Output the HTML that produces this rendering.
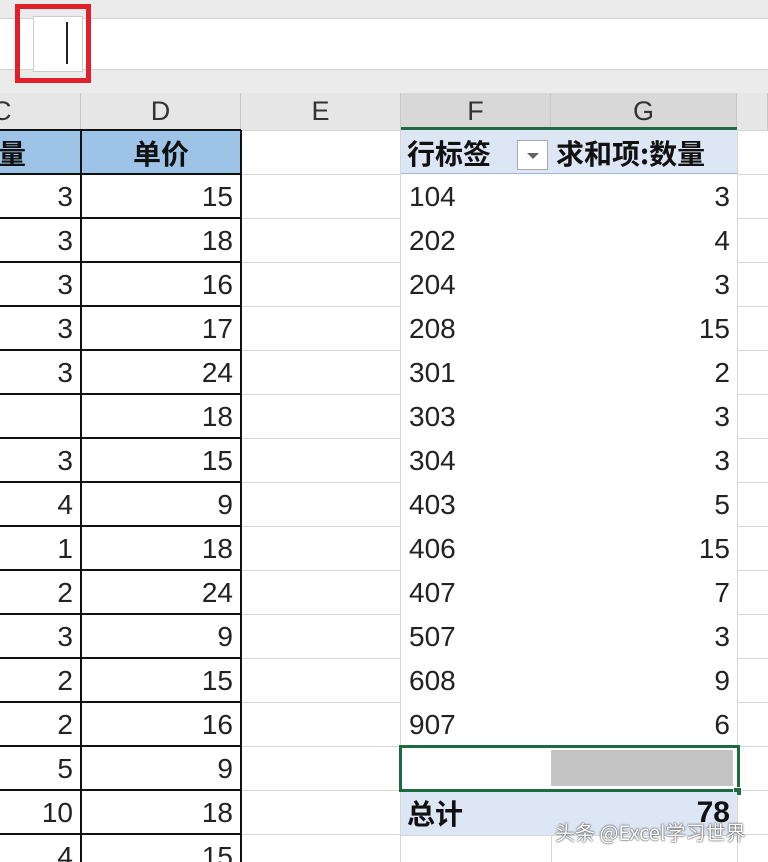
<!DOCTYPE html>
<html style="overflow:hidden;width:768px;height:862px"><head><meta charset="utf-8"><style>
body{margin:0;width:768px;height:862px;overflow:hidden;background:#fff;position:relative;font-family:"Liberation Sans","Noto Sans CJK SC",sans-serif;}
.a{position:absolute;box-sizing:border-box;}
.t{position:absolute;font-size:28px;color:#222;line-height:44px;height:44px;white-space:nowrap;}
.h{font-family:"Noto Sans CJK SC",sans-serif;font-weight:bold;font-size:28px;color:#111;}
.col{position:absolute;top:93px;height:37px;line-height:37px;text-align:center;font-size:27px;color:#333;background:#e6e6e6;border-right:1px solid #c8c8c8;box-sizing:border-box;}
</style></head><body>
<div class="a" style="left:0;top:0;width:768px;height:18px;background:#ebebeb"></div>
<div class="a" style="left:0;top:18px;width:768px;height:52px;background:#fff;border-top:1px solid #d0d0d0;border-bottom:1px solid #d0d0d0"></div>
<div class="a" style="left:0;top:70px;width:768px;height:23px;background:#ebebeb"></div>
<div class="a" style="left:33px;top:16px;width:50px;height:56px;background:#fff;border:1px solid #ccc"></div>
<div class="a" style="left:66px;top:22px;width:2px;height:42px;background:#222"></div>
<div class="a" style="left:15px;top:4px;width:76px;height:79px;border:5px solid #e0202a"></div>
<div class="col" style="left:0;width:81px;text-align:left;padding-left:0"><span style="margin-left:-8px">C</span></div>
<div class="col" style="left:81px;width:160px">D</div>
<div class="col" style="left:241px;width:160px">E</div>
<div class="col" style="left:401px;width:150px;background:#d8d8d8">F</div>
<div class="col" style="left:551px;width:186px;background:#d8d8d8">G</div>
<div class="col" style="left:737px;width:31px"></div>
<div class="a" style="left:401px;top:127px;width:336px;height:3px;background:#1e6b41"></div>
<div id="g"></div>
<script>
var g=document.getElementById('g'),h='';
var C=['3','3','3','3','3','','3','4','1','2','3','2','2','5','10','4'];
var D=['15','18','16','17','24','18','15','9','18','24','9','15','16','9','18','15'];
var F=['104','202','204','208','301','303','304','403','406','407','507','608','907'];
var G=['3','4','3','15','2','3','3','5','15','7','3','9','6'];
for(var i=0;i<17;i++){var y=130+44*i;
h+='<div class="a" style="left:241px;top:'+y+'px;width:160px;height:1px;background:#d6d6d6"></div>';
h+='<div class="a" style="left:737px;top:'+y+'px;width:31px;height:1px;background:#d6d6d6"></div>';}
h+='<div class="a" style="left:400px;top:130px;width:1px;height:732px;background:#d6d6d6"></div>';
h+='<div class="a" style="left:737px;top:130px;width:1px;height:732px;background:#d6d6d6"></div>';
h+='<div class="a" style="left:551px;top:835px;width:1px;height:27px;background:#d6d6d6"></div>';
h+='<div class="a" style="left:401px;top:835px;width:336px;height:1px;background:#d6d6d6"></div>';
h+='<div class="a" style="left:0;top:130px;width:241px;height:44px;background:#9dc3e6"></div>';
for(var i=0;i<17;i++){var y=130+44*i;
h+='<div class="a" style="left:0;top:'+(y-1)+'px;width:241px;height:2px;background:#111"></div>';}
h+='<div class="a" style="left:80px;top:130px;width:2px;height:732px;background:#111"></div>';
h+='<div class="a" style="left:240px;top:130px;width:2px;height:732px;background:#111"></div>';
h+='<div class="a" style="left:0;top:130px;width:80px;height:44px;overflow:hidden"><div class="t h" style="left:-30px;top:1px">数量</div></div>';
h+='<div class="t h" style="left:81px;top:131px;width:160px;text-align:center">单价</div>';
for(var i=0;i<16;i++){var y=175+44*i;
h+='<div class="t" style="left:0;top:'+y+'px;width:73px;text-align:right">'+C[i]+'</div>';
h+='<div class="t" style="left:81px;top:'+y+'px;width:152px;text-align:right">'+D[i]+'</div>';}
h+='<div class="a" style="left:401px;top:130px;width:336px;height:44px;background:#dce6f4;border-bottom:1px solid #9fb6d8"></div>';
h+='<div class="t h" style="left:407px;top:131px">行标签</div>';
h+='<div class="a" style="left:517px;top:140px;width:31px;height:30px;background:#fff;border:1px solid #aaa"></div>';
h+='<div class="a" style="left:527px;top:153px;width:0;height:0;border-left:6px solid transparent;border-right:6px solid transparent;border-top:6px solid #666"></div>';
h+='<div class="t h" style="left:556px;top:131px">求和项:数量</div>';
for(var i=0;i<13;i++){var y=175+44*i;
h+='<div class="t" style="left:409px;top:'+y+'px">'+F[i]+'</div>';
h+='<div class="t" style="left:551px;top:'+y+'px;width:179px;text-align:right">'+G[i]+'</div>';}
h+='<div class="a" style="left:551px;top:750px;width:182px;height:36px;background:#c4c4c4"></div>';
h+='<div class="a" style="left:399px;top:745px;width:341px;height:47px;border:3px solid #1e6b41"></div>';
h+='<div class="a" style="left:733px;top:787px;width:9px;height:9px;background:#1e6b41;border:1px solid #fff"></div>';
h+='<div class="a" style="left:401px;top:792px;width:336px;height:43px;background:#dce6f4"></div>';
h+='<div class="t h" style="left:407px;top:791px">总计</div>';
h+='<div class="t" style="left:551px;top:791px;width:179px;text-align:right;font-weight:bold;color:#111;font-size:30px">78</div>';
h+='<div class="a" style="left:555px;top:817px;font-size:20px;color:#fff;font-family:\'Noto Sans CJK SC\',sans-serif;text-shadow:0 0 2px #444,0 0 1px #222;white-space:nowrap">头条 @Excel学习世界</div>';
g.innerHTML=h;
</script>
</body></html>
